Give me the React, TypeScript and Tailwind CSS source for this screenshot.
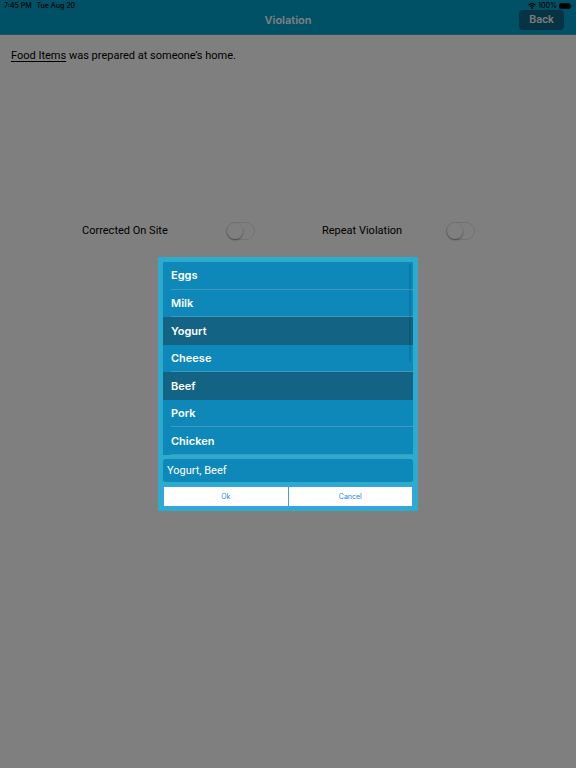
import { useState } from 'react';

const FOODS = ['Eggs', 'Milk', 'Yogurt', 'Cheese', 'Beef', 'Pork', 'Chicken'];

function StatusBar() {
  return (
    <div className="flex h-3 items-center justify-between px-1 text-[7px] leading-3 font-medium text-black">
      <div className="flex gap-[5px]">
        <span>7:45 PM</span>
        <span>Tue Aug 20</span>
      </div>
      <div className="flex items-center gap-[2px]">
        <svg width="8" height="6" viewBox="0 0 16 12" aria-hidden="true">
          <path d="M1 4.2a10 10 0 0 1 14 0" fill="none" stroke="black" strokeWidth="2.4" />
          <path d="M3.8 7.2a6 6 0 0 1 8.4 0" fill="none" stroke="black" strokeWidth="2.2" />
          <path d="M8 12 5.4 9.3a3.8 3.8 0 0 1 5.2 0z" fill="black" />
        </svg>
        <span>100%</span>
        <svg width="13" height="6" viewBox="0 0 13 6" aria-hidden="true">
          <rect x="0" y="0.25" width="11.5" height="5.5" rx="1.5" fill="black" />
          <path d="M12.2 2v2c.8-.2.8-1.8 0-2z" fill="black" />
        </svg>
      </div>
    </div>
  );
}

function Toggle({ label, labelWidth }: { label: string; labelWidth: string }) {
  return (
    <label className="flex items-center">
      <span className={labelWidth}>{label}</span>
      <input
        type="checkbox"
        role="switch"
        className="flex h-[18px] w-[29px] appearance-none items-center rounded-full border border-[#e4e4e4] before:size-4 before:rounded-full before:bg-white before:shadow-[0_1px_2px_rgba(0,0,0,0.4)] checked:justify-end checked:bg-green-500"
      />
    </label>
  );
}

export default function App() {
  const [selected, setSelected] = useState<string[]>(['Yogurt', 'Beef']);
  const toggle = (food: string) =>
    setSelected(selected.includes(food) ? selected.filter((f) => f !== food) : [...selected, food]);

  return (
    <div className="min-h-screen bg-white font-['Inter','Liberation_Sans',sans-serif] text-[11px] leading-4 text-black">
      <header className="h-[35px] border-b border-[#4aa3bc] bg-[#00a0cc]">
        <StatusBar />
        <div className="-mt-[2px] grid grid-cols-3 items-center px-3">
          <h1 className="col-start-2 text-center font-semibold text-white">Violation</h1>
          <button
            type="button"
            className="h-5 w-[45px] justify-self-end rounded-[4px] bg-[#11678a] font-['Roboto','Liberation_Sans',sans-serif] leading-[18px] font-medium text-white"
          >
            Back
          </button>
        </div>
      </header>

      <main className="font-['Roboto','Liberation_Sans',sans-serif] leading-[18px]">
        <p className="h-[187px] px-[11px] pt-3">
          <a href="#food-items" className="underline underline-offset-2">Food Items</a> was prepared at someone’s home.
        </p>
        <div className="flex justify-between pr-[101px] pl-[82px]">
          <Toggle label="Corrected On Site" labelWidth="w-[144px]" />
          <Toggle label="Repeat Violation" labelWidth="w-[124px]" />
        </div>
      </main>

      <div className="fixed inset-0 flex items-center justify-center bg-black/50">
        <div role="dialog" aria-label="Food Items" className="flex w-[260px] flex-col gap-1 bg-[#2dabcd] px-[5px] pt-[5px] pb-1">
          <div className="relative">
            <ul className="grid h-[193px] grid-rows-7 bg-[#0e87b9] font-semibold text-white">
              {FOODS.map((food) => (
                <li key={food} className={selected.includes(food) ? 'flex bg-[#136484]' : 'flex'}>
                  <button
                    type="button"
                    aria-pressed={selected.includes(food)}
                    onClick={() => toggle(food)}
                    className={
                      selected.includes(food)
                        ? 'ml-2 flex-1 text-left'
                        : 'ml-2 flex-1 border-b border-[#4297bd] text-left'
                    }
                  >
                    {food}
                  </button>
                </li>
              ))}
            </ul>
            <div className="absolute top-[2px] right-[2px] h-[98px] w-[2px] rounded-full bg-black/10" />
          </div>
          <input
            type="text"
            readOnly
            aria-label="Selected items"
            value={selected.join(', ')}
            className="h-[23px] w-full rounded-[3px] bg-[#0e87b9] px-1 font-['Roboto','Liberation_Sans',sans-serif] text-[11px] leading-[18px] text-white outline-none"
          />
          <div className="grid h-[21px] grid-cols-2 gap-px border border-[#3c9df5] bg-[#3c9df5] text-[7px] leading-3 text-[#1a84ff]">
            <button type="button" className="bg-white">Ok</button>
            <button type="button" className="bg-white">Cancel</button>
          </div>
        </div>
      </div>
    </div>
  );
}
